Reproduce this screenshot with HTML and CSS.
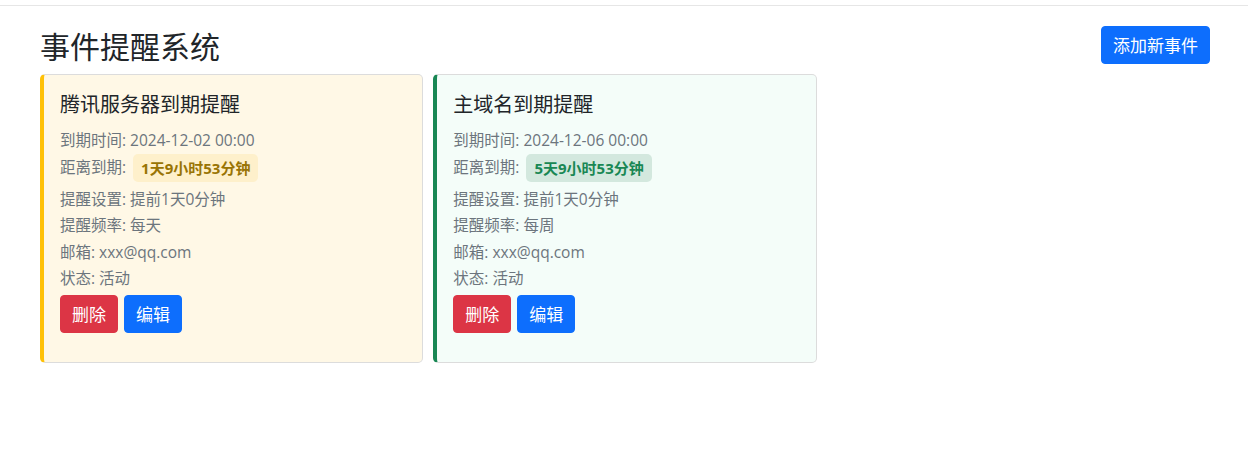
FILE: index.html
```html
<!DOCTYPE html>
<html lang="zh-CN">
<head>
<meta charset="utf-8">
<title>事件提醒系统</title>
<link rel="stylesheet" href="styles.css">
</head>
<body>
<div class="topbar"></div>
<main class="page">
  <header class="page-header">
    <h1 class="page-title">事件提醒系统</h1>
    <button class="btn btn-primary">添加新事件</button>
  </header>
  <section class="event-grid">
    <article class="event-card event-warning">
      <h2 class="event-title">腾讯服务器到期提醒</h2>
      <p class="event-line">到期时间: 2024-12-02 00:00</p>
      <p class="event-line event-line-badge">距离到期: <span class="countdown countdown-warning">1天9小时53分钟</span></p>
      <p class="event-line">提醒设置: 提前1天0分钟</p>
      <p class="event-line">提醒频率: 每天</p>
      <p class="event-line">邮箱: xxx@qq.com</p>
      <p class="event-line">状态: 活动</p>
      <div class="event-actions">
        <button class="btn btn-danger">删除</button>
        <button class="btn btn-primary">编辑</button>
      </div>
    </article>
    <article class="event-card event-success">
      <h2 class="event-title">主域名到期提醒</h2>
      <p class="event-line">到期时间: 2024-12-06 00:00</p>
      <p class="event-line event-line-badge">距离到期: <span class="countdown countdown-success">5天9小时53分钟</span></p>
      <p class="event-line">提醒设置: 提前1天0分钟</p>
      <p class="event-line">提醒频率: 每周</p>
      <p class="event-line">邮箱: xxx@qq.com</p>
      <p class="event-line">状态: 活动</p>
      <div class="event-actions">
        <button class="btn btn-danger">删除</button>
        <button class="btn btn-primary">编辑</button>
      </div>
    </article>
  </section>
</main>
</body>
</html>
```
FILE: styles.css
```css
* { box-sizing: border-box; }

html, body {
  margin: 0;
  padding: 0;
  background: #fff;
}

body {
  font-family: "Open Sans", "Noto Sans CJK SC", sans-serif;
  color: #212529;
  font-size: 16px;
}

.topbar {
  height: 6px;
  border-bottom: 1px solid #e6e6e6;
}

.page {
  padding: 0 38px 0 40px;
}

.page-header {
  display: flex;
  align-items: center;
  justify-content: space-between;
  padding-top: 20px;
  margin-bottom: 10px;
}

.page-title {
  margin: 0;
  font-family: "Noto Sans CJK SC", sans-serif;
  font-size: 30px;
  font-weight: 400;
  line-height: 37px;
  color: #212529;
}

.btn {
  font-family: "Noto Sans CJK SC", sans-serif;
  font-size: 17px;
  line-height: 24px;
  padding: 6px 11px;
  border: 1px solid transparent;
  border-radius: 4px;
  color: #fff;
  cursor: pointer;
}

.btn-primary {
  background: #0d6efd;
  border-color: #0d6efd;
}

.btn-danger {
  background: #dc3545;
  border-color: #dc3545;
}

.event-grid {
  display: grid;
  grid-template-columns: repeat(3, 1fr);
  column-gap: 10px;
  align-items: start;
}

.event-card {
  border: 1px solid #dcdcdc;
  border-left-width: 4px;
  border-radius: 5px;
  padding: 17px 16px 29px 16px;
}

.event-warning {
  background: #fff8e6;
  border-left-color: #ffc107;
}

.event-success {
  background: #f4fdf9;
  border-left-color: #198754;
}

.event-title {
  margin: 0 0 13px;
  font-family: "Noto Sans CJK SC", sans-serif;
  font-size: 20px;
  font-weight: 400;
  line-height: 24px;
  color: #212529;
}

.event-line {
  margin: 0 0 4px;
  font-size: 15.5px;
  line-height: 22.5px;
  color: #6c757d;
  display: flex;
  align-items: center;
  white-space: pre;
}

.event-line-badge {
  margin-top: -2px;
  margin-bottom: 6px;
}

.countdown {
  display: inline-block;
  font-weight: 700;
  font-size: 15px;
  padding: 0 8px;
  height: 28px;
  line-height: 28px;
  border-radius: 5px;
  margin-left: 3px;
}

.countdown-warning {
  background: #fef0cb;
  color: #997404;
}

.countdown-success {
  background: #d3e8de;
  color: #198754;
}

.event-actions {
  display: flex;
  gap: 6px;
  margin-top: 5px;
}
```
